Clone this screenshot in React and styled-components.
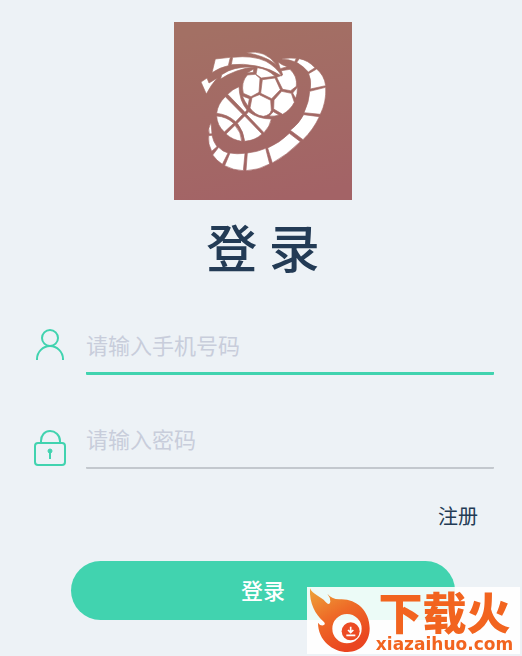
import React from "react";
import styled, { createGlobalStyle } from "styled-components";

const GlobalStyle = createGlobalStyle`
  * { box-sizing: border-box; }
  body {
    margin: 0;
    background: #edf2f6;
    color: #233b55;
    font-family: "Noto Sans CJK SC", sans-serif;
  }
`;

const Page = styled.main`
  display: flex;
  flex-direction: column;
  align-items: center;
  min-height: 100vh;
  padding: 22px 28px 36px 32px;
`;

const Logo = styled.svg`
  display: block;
  width: 178px;
  height: 178px;
`;

const Title = styled.h1`
  margin: 16px 0 0;
  font-size: 51px;
  font-weight: 500;
  line-height: 60px;
`;

const Form = styled.form`
  display: flex;
  flex-direction: column;
  width: 100%;
  margin-top: 39px;
`;

const Fields = styled.div`
  display: grid;
  gap: 34px;
`;

const Field = styled.label`
  display: flex;
  align-items: flex-end;
  gap: 16px;
  height: 60px;
`;

const FieldIcon = styled.svg`
  flex: none;
  width: 38px;
  height: 48px;
  fill: none;
  stroke: #41d3af;
  stroke-width: 2;
`;

const TextInput = styled.input`
  flex: 1;
  min-width: 0;
  height: 60px;
  padding: 0;
  border: 0;
  border-bottom: ${({ $active }) => ($active ? "3px solid #41d3af" : "2px solid #c3c8ce")};
  border-radius: 1px;
  outline: none;
  background: transparent;
  color: #233b55;
  font: 400 22px "Noto Sans CJK SC", sans-serif;

  &::placeholder {
    color: #c8cddb;
    opacity: 1;
  }
`;

const RegisterLink = styled.a`
  align-self: flex-end;
  margin: 31px 16px 0 0;
  color: #233b55;
  font-size: 20px;
  line-height: 32px;
  text-decoration: none;
`;

const SubmitButton = styled.button`
  height: 59px;
  margin: 29px 39px 0;
  padding: 0 0 4px;
  border: 0;
  border-radius: 30px;
  background: #41d3af;
  color: #fff;
  font: 500 22px "Noto Sans CJK SC", sans-serif;
  cursor: pointer;
`;

const SiteBadge = styled.aside`
  position: fixed;
  right: 2px;
  bottom: 2px;
  display: flex;
  height: 67px;
  padding-right: 2px;
  background: rgba(255, 255, 255, 0.9);
  color: #f2641f;
`;

const Flame = styled.svg`
  width: 64px;
  height: 67px;
`;

const BadgeText = styled.div`
  display: flex;
  flex-direction: column;
  align-items: center;
  gap: 4px;
  width: 147px;
  padding-top: 4px;
`;

const BadgeName = styled.strong`
  font-size: 44px;
  font-weight: 900;
  line-height: 40px;
  white-space: nowrap;
`;

const BadgeSite = styled.span`
  font: 700 17px/18px "DejaVu Sans", sans-serif;
`;

const logoShapes = [
  // outer ring
  "M337 122Q358 119 379 121L374 131Q356 124 337 124Z",
  "M388 122Q415 127 435 149L415 162Q400 145 380 133Z",
  "M440 153Q463 172 467 203L421 213Q425 187 416 167Z",
  "M467 208Q470 250 451 289L402 284Q418 250 419 220Z",
  "M448 296Q430 335 399 365L361 337Q388 316 401 290Z",
  "M391 371Q350 412 307 435L293 390Q330 374 358 346Z",
  "M299 438Q265 457 228 458L232 405Q262 402 287 391Z",
  "M220 458Q190 457 164 443L180 405Q200 409 225 406Z",
  "M157 439Q140 428 128 411L146 388Q158 401 174 405Z",
  "M125 400Q113 378 116 353L126 352Q130 372 141 386Z",
  "M123 314Q112 331 118 348L126 347Z",
  // ribbon
  "M136 123L181 118L175 143Q150 148 126 164Z",
  "M188 118Q248 111 288 130Q320 148 335 174Q300 151 260 144Q220 136 184 140Z",
  "M229 104Q286 94 319 140Q285 113 229 104Z",
  "M93 192L111 180L117 195L142 180Q124 199 109 228Z",
  "M155 170Q190 144 252 147Q195 154 152 183Z",
  "M324 132Q335 141 352 146L331 152Z",
  // football
  "M231 165L251 153L250 163Z",
  "M262 149Q293 153 315 175L274 180L258 169Z",
  "M232 171L256 169L270 181L267 223L243 236L220 226Q212 193 232 171Z",
  "M277 185L315 180L331 215L305 242L272 226Z",
  "M246 239L268 230L302 247L304 277Q300 292 280 295Q255 292 240 270Z",
  "M312 246L335 220L364 226L373 253Q362 275 338 289L311 273Z",
  "M320 178L338 171L334 158L360 154Q383 175 379 205L362 218L338 214Z",
  "M368 225L382 208Q383 227 377 241Z",
  "M298 294L310 281L327 291Q312 296 298 294Z",
  "M217 234L238 242L234 265Q224 250 217 234Z",
  // basketball
  "M173 229Q188 213 207 206Q208 248 231 276L225 283Z",
  "M166 236L218 289L197 311Q172 289 140 286Q143 258 166 236Z",
  "M140 294Q170 296 191 316L163 342Q141 322 140 294Z",
  "M168 348L195 322Q214 343 215 370Q188 366 168 348Z",
  "M202 316L224 294L276 348Q255 368 224 370Q221 340 202 316Z",
  "M229 289L236 281Q264 303 304 303Q300 325 282 344Z",
];

function BrandLogo() {
  return (
    <Logo viewBox="12 12 534 534" role="img" aria-label="logo">
      <defs>
        <linearGradient id="brand" gradientUnits="userSpaceOnUse" x1="225" y1="12" x2="332" y2="546">
          <stop offset="0" stopColor="#a37064" />
          <stop offset="1" stopColor="#a36366" />
        </linearGradient>
      </defs>
      <rect x="12" y="12" width="534" height="534" fill="url(#brand)" />
      <path d={logoShapes.join("")} fill="#fff" stroke="url(#brand)" strokeWidth="2" />
    </Logo>
  );
}

export default function App() {
  return (
    <>
      <GlobalStyle />
      <Page>
        <BrandLogo />
        <Title>登 录</Title>
        <Form onSubmit={(event) => event.preventDefault()}>
          <Fields>
            <Field>
              <FieldIcon viewBox="0 0 38 48" aria-hidden="true">
                <circle cx="18" cy="11" r="8" />
                <path d="M5 33v-1c0-7 6-13 13-13s13 6 13 13v1" />
              </FieldIcon>
              <TextInput $active type="tel" placeholder="请输入手机号码" aria-label="请输入手机号码" />
            </Field>
            <Field>
              <FieldIcon viewBox="0 0 38 48" aria-hidden="true">
                <rect x="3" y="22" width="30" height="22" rx="3" />
                <path d="M9 22v-2c0-6 4-10 9-10s10 4 10 10v2M18 31v7" />
                <circle cx="18" cy="30" r="2" fill="#41d3af" stroke="#41d3af" strokeWidth="1" />
              </FieldIcon>
              <TextInput type="password" placeholder="请输入密码" aria-label="请输入密码" />
            </Field>
          </Fields>
          <RegisterLink href="#register">注册</RegisterLink>
          <SubmitButton type="submit">登录</SubmitButton>
        </Form>
      </Page>
      <SiteBadge>
        <Flame viewBox="21 21 192 201" aria-hidden="true">
          <defs>
            <linearGradient id="flame" x1="0" y1="0" x2="0.5" y2="1">
              <stop offset="0" stopColor="#eda53a" />
              <stop offset="0.5" stopColor="#ee6a27" />
              <stop offset="1" stopColor="#ea4520" />
            </linearGradient>
          </defs>
          <path
            fill="url(#flame)"
            fillRule="evenodd"
            d="M30 25C38 44 62 48 77 66Q88 79 91 65Q91 52 82 41Q94 57 118 58C164 54 209 88 209 145C209 188 181 216 143 216C98 216 54 181 54 128Q60 138 70 136Q80 131 68 122C48 105 27 71 30 25ZM141 102A44 44 0 1 0 141 190A44 44 0 1 0 141 102Z"
          />
          <circle cx="152" cy="154" r="27" fill="#ec4b25" />
          <path d="M152 140v16M144 150l8 8 8-8M139 166h27" fill="none" stroke="#fff" strokeWidth="5" />
        </Flame>
        <BadgeText>
          <BadgeName>下载火</BadgeName>
          <BadgeSite>xiazaihuo.com</BadgeSite>
        </BadgeText>
      </SiteBadge>
    </>
  );
}
